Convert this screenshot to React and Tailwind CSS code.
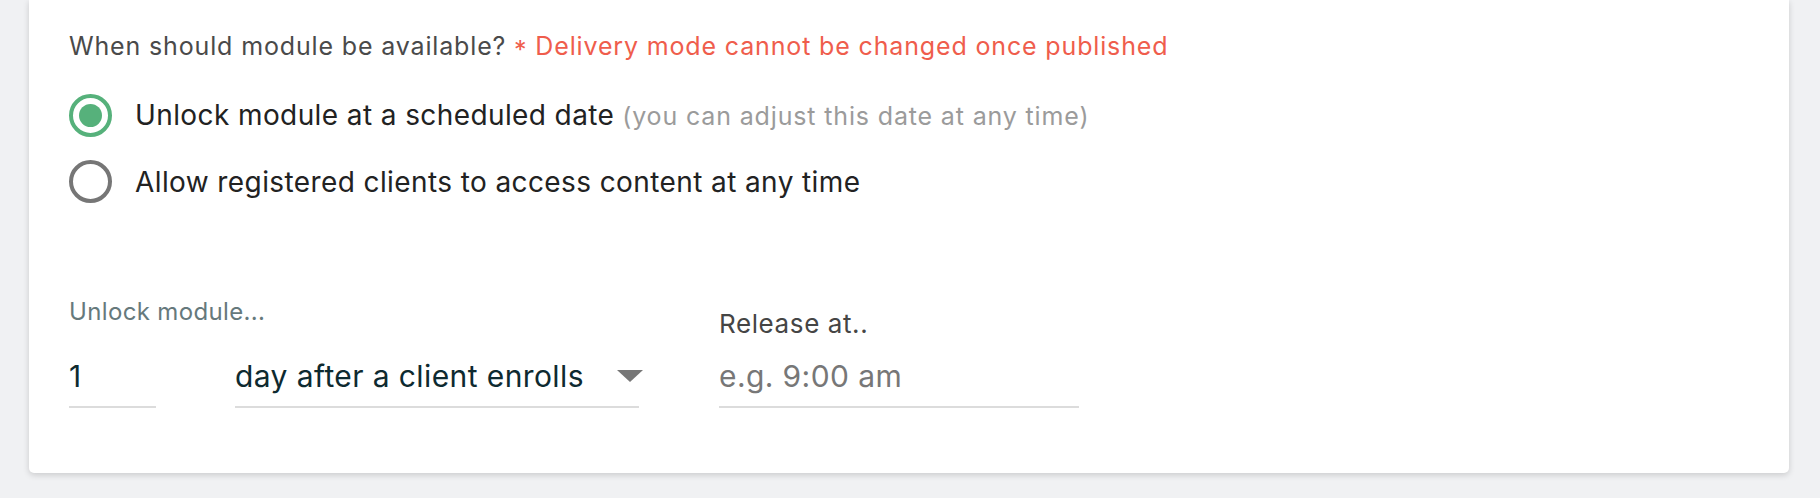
import React, { useState } from 'react';

const options = [
  {
    id: 'scheduled',
    label: 'Unlock module at a scheduled date',
    hint: '(you can adjust this date at any time)',
  },
  {
    id: 'anytime',
    label: 'Allow registered clients to access content at any time',
  },
];

function Radio({ checked }) {
  return (
    <span
      className={
        checked
          ? 'flex items-center justify-center w-[43px] h-[43px] rounded-full border-[4px] border-[#56b17b] shrink-0'
          : 'flex items-center justify-center w-[43px] h-[43px] rounded-full border-[4px] border-[#767676] shrink-0'
      }
    >
      {checked && <span className="w-[23px] h-[23px] rounded-full bg-[#56b17b]" />}
    </span>
  );
}

export default function App() {
  const [mode, setMode] = useState('scheduled');

  return (
    <div
      className="min-h-screen bg-[#f0f1f3] pl-[29px] pr-[31px]"
      style={{ fontFamily: 'Inter, "Noto Sans", sans-serif' }}
    >
      <div className="bg-white rounded-b-[5px] shadow-[0_2px_6px_rgba(0,0,0,0.16)] pl-[40px] pt-[32px] pb-[65px]">
        {/* Header */}
        <p className="text-[25px] leading-[28px] tracking-[0.85px] text-[#4a4a4a]">
          When should module be available?{' '}
          <span className="text-[#ef5d4c]">
            <span className="inline-block translate-y-[4px]">*</span> Delivery mode cannot be changed once published
          </span>
        </p>

        {/* Delivery mode options */}
        <div className="flex flex-col gap-[23px] mt-[34px]">
          {options.map(opt => (
            <label
              key={opt.id}
              className="flex items-center gap-[23px] cursor-pointer"
              onClick={() => setMode(opt.id)}
            >
              <Radio checked={mode === opt.id} />
              <span className="text-[28px] leading-[32px] tracking-[0.4px] text-[#222]">
                {opt.label}
                {opt.hint && (
                  <span className="text-[25px] tracking-[0.85px] text-[#9b9b9b]"> {opt.hint}</span>
                )}
              </span>
            </label>
          ))}
        </div>

        {/* Unlock / release inputs */}
        <div className="flex items-end gap-[80px] mt-[95px]">
          <div className="flex flex-col">
            <span className="text-[24px] leading-[28px] tracking-[0.35px] text-[#66797c]">Unlock module...</span>
            <div className="flex gap-[79px] mt-[20px]">
              <div className="w-[87px] h-[62px] border-b-2 border-[#dcdcdc] flex items-center text-[30px] tracking-[0.4px] text-[#0e2a30]">
                1
              </div>
              <div className="w-[404px] h-[62px] border-b-2 border-[#dcdcdc] flex items-center justify-between text-[30px] tracking-[0.4px] text-[#0e2a30]">
                <span>day after a client enrolls</span>
                <svg width="26" height="12" viewBox="0 0 26 12" className="mr-[-4px]">
                  <path d="M0 0 L26 0 L13 12 Z" fill="#777" />
                </svg>
              </div>
            </div>
          </div>

          <div className="flex flex-col">
            <span className="text-[26px] leading-[28px] tracking-[0.6px] text-[#454545]">Release at..</span>
            <div className="w-[360px] h-[62px] mt-[8px] border-b-2 border-[#dcdcdc] flex items-center text-[30px] tracking-[0.4px] text-[#777]">
              e.g. 9:00 am
            </div>
          </div>
        </div>
      </div>
    </div>
  );
}
